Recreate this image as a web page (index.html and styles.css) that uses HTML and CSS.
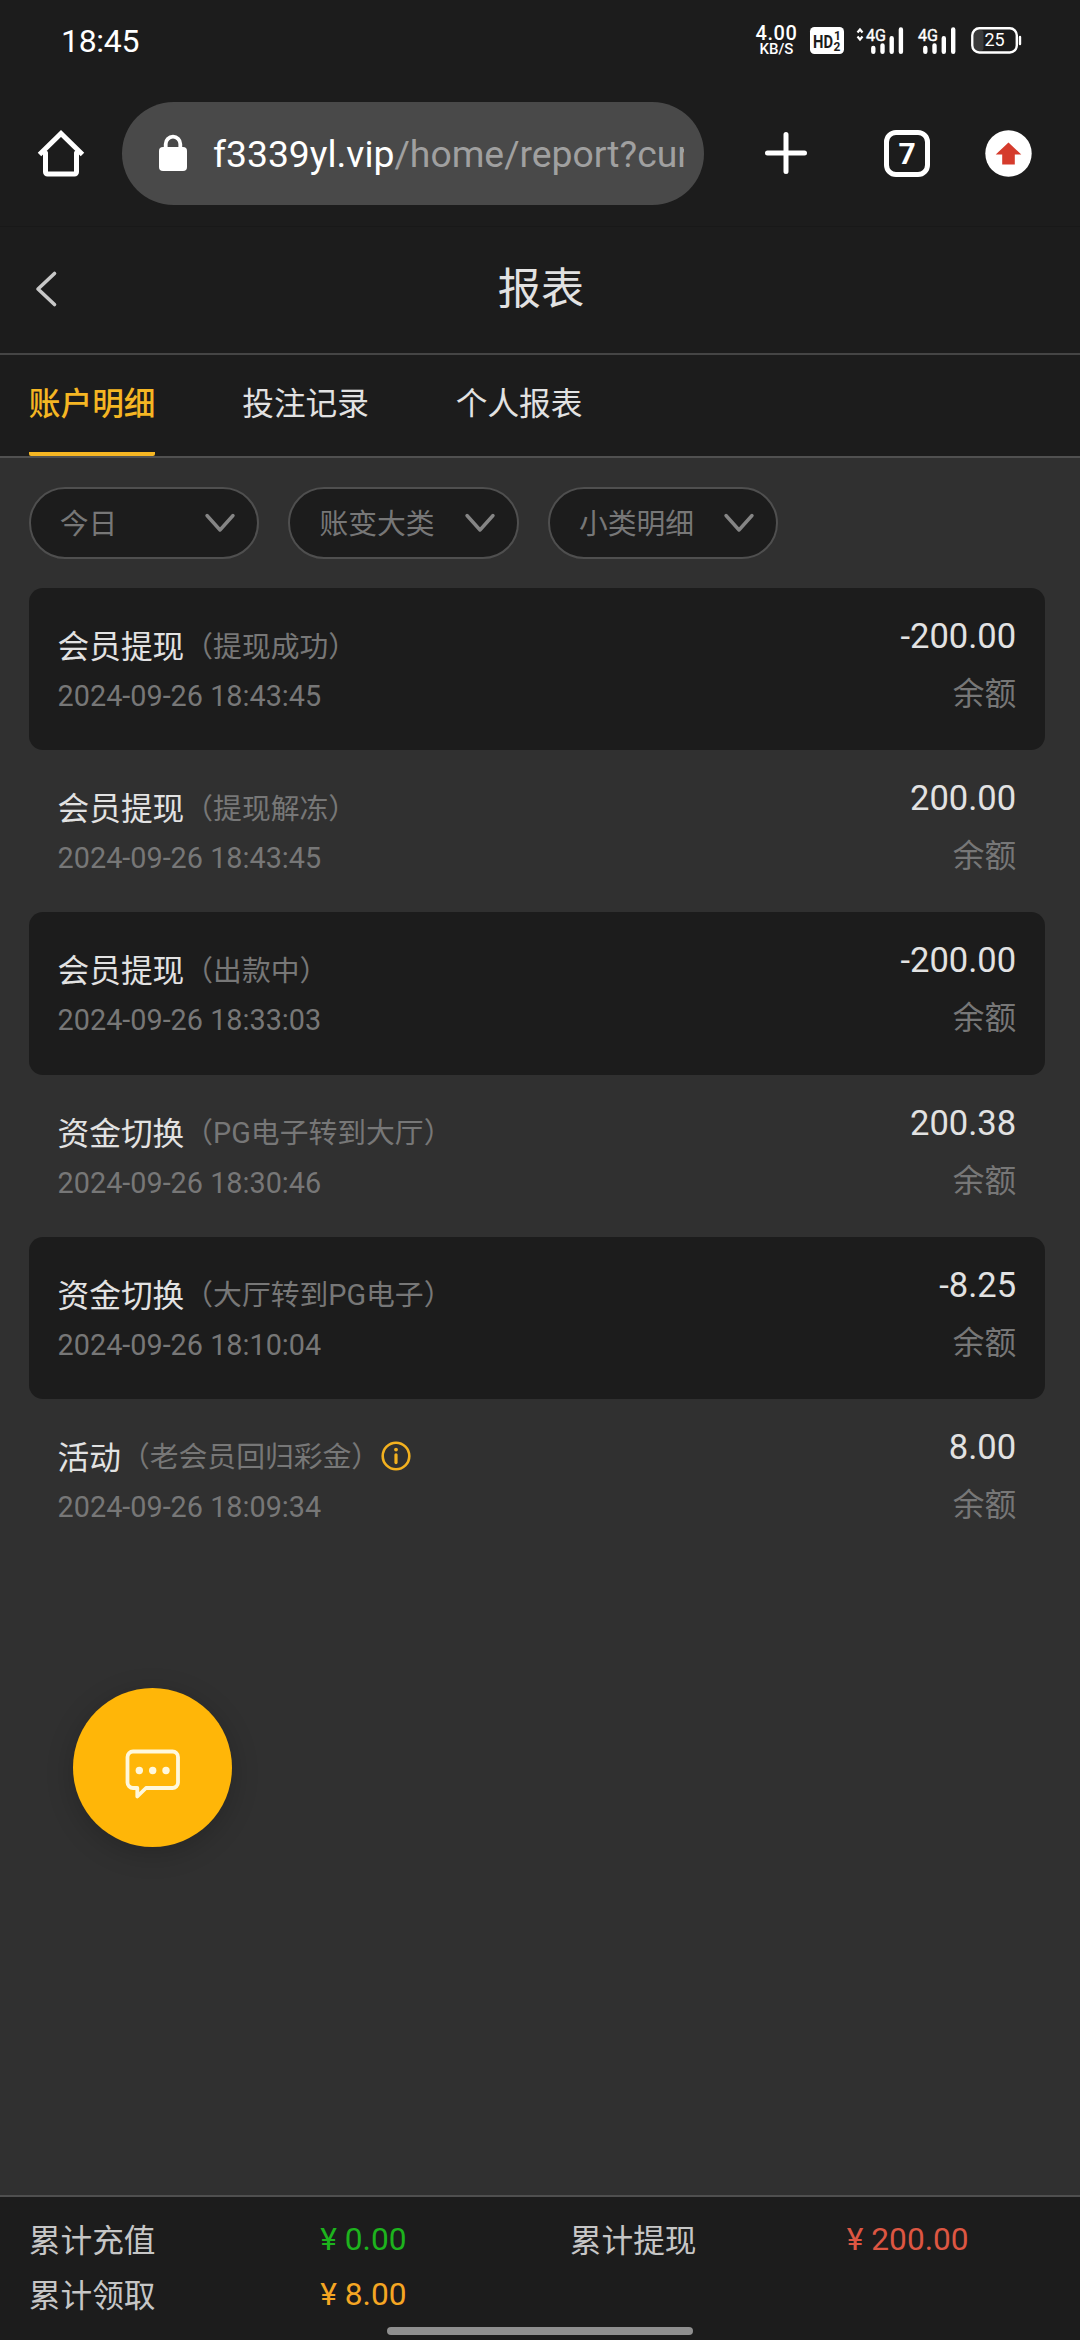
FILE: index.html
```html
<!DOCTYPE html>
<html lang="zh-CN">
<head>
<meta charset="utf-8">
<title>报表</title>
<link rel="stylesheet" href="styles.css">
</head>
<body>
<div class="status-bar">
  <span class="clock">18:45</span>
  <div class="status-icons">
    <div class="net-speed"><b>4.00</b><span>KB/S</span></div>
    <svg class="hd" width="34" height="27" viewBox="0 0 34 27">
      <rect width="34" height="27" rx="4.5" fill="#fff"/>
      <text x="3" y="20.5" font-size="18" font-weight="700" textLength="20" lengthAdjust="spacingAndGlyphs" fill="#1c1c1c">HD</text>
      <text x="24" y="13" font-size="12" font-weight="700" fill="#1c1c1c">1</text>
      <text x="23.5" y="24" font-size="12" font-weight="700" fill="#1c1c1c">2</text>
    </svg>
    <svg class="signal-a" width="48" height="27" viewBox="0 0 48 27">
      <path d="M1.500 5.500 4 2.500l2.500 3M1.500 9.500 4 12.500l2.500-3" fill="none" stroke="#fff" stroke-width="2.200"/>
      <text x="10" y="13.500" font-size="17" textLength="20" lengthAdjust="spacingAndGlyphs" fill="#fff" stroke="#fff" stroke-width=".4">4G</text>
      <path d="M17.300 21v3.800M26.500 18.500v6.300M35.700 11.300v13.500M44.900 2.500v22.300" stroke="#fff" stroke-width="4.400" stroke-linecap="round"/>
    </svg>
    <svg class="signal-b" width="39" height="27" viewBox="0 0 39 27">
      <text x="0" y="13.500" font-size="17" textLength="20" lengthAdjust="spacingAndGlyphs" fill="#fff" stroke="#fff" stroke-width=".4">4G</text>
      <path d="M7.300 21v3.800M16.500 18.500v6.300M25.800 11.300v13.500M35.200 2.500v22.300" stroke="#fff" stroke-width="4.400" stroke-linecap="round"/>
    </svg>
    <svg width="51" height="27" viewBox="0 0 51 27">
      <rect x="3" y="3" width="9.500" height="21" rx="3" fill="#3b3b3b"/>
      <rect x="1.300" y="1.300" width="44.500" height="24.200" rx="7" fill="none" stroke="#fff" stroke-width="2.400"/>
      <path d="M49 10v7" stroke="#fff" stroke-width="2.400" stroke-linecap="round"/>
      <text x="13.600" y="19.200" font-size="18" textLength="20" fill="#fff">25</text>
    </svg>
  </div>
</div>

<div class="browser-bar">
  <svg class="home" width="48" height="48" viewBox="0 0 48 48" fill="none" stroke="#fff" stroke-width="5" stroke-linecap="round" stroke-linejoin="round">
    <path d="M8.500 24v19a2 2 0 0 0 2 2h27a2 2 0 0 0 2-2V24"/>
    <path d="M2.500 25.500 24 4.500l21.500 21" stroke-linecap="butt" stroke-linejoin="miter"/>
  </svg>
  <div class="address">
    <svg width="28" height="36" viewBox="0 0 28 36">
      <rect y="12" width="28" height="24" rx="4" fill="#fff"/>
      <path d="M6.700 14V9a7.300 7.300 0 0 1 14.600 0v5" fill="none" stroke="#fff" stroke-width="3.800"/>
    </svg>
    <div class="url">f3339yl.vip<span>/home/report?cur</span></div>
  </div>
  <svg class="plus" width="42" height="42" viewBox="0 0 42 42"><path d="M21 2.500v37M2.500 21h37" stroke="#fff" stroke-width="5" stroke-linecap="round"/></svg>
  <div class="tab-count">7</div>
  <svg class="update" width="47" height="47" viewBox="0 0 47 47">
    <circle cx="23.500" cy="23.500" r="23.200" fill="#fff"/>
    <path d="M23.500 12.500 36.300 24.500H29.800V34.500H17.200V24.500H10.700Z" fill="#d53b2c"/>
  </svg>
</div>

<header class="page-header">
  <svg class="back" width="22" height="36" viewBox="0 0 22 36"><path d="M19.500 1.500 3 17l16.500 15.500" fill="none" stroke="#c8c8c8" stroke-width="3.600" stroke-linecap="round" stroke-linejoin="round"/></svg>
  <h1>报表</h1>
</header>

<nav class="tabs">
  <a class="tab active">账户明细</a>
  <a class="tab">投注记录</a>
  <a class="tab">个人报表</a>
</nav>

<main>
  <div class="filters">
    <div class="filter"><span>今日</span><svg width="30" height="20" viewBox="0 0 30 20"><path d="M2 2.500 15 17 28 2.500"/></svg></div>
    <div class="filter"><span>账变大类</span><svg width="30" height="20" viewBox="0 0 30 20"><path d="M2 2.500 15 17 28 2.500"/></svg></div>
    <div class="filter"><span>小类明细</span><svg width="30" height="20" viewBox="0 0 30 20"><path d="M2 2.500 15 17 28 2.500"/></svg></div>
  </div>

  <div class="records">
    <div class="record">
      <div class="info"><div class="title">会员提现<small>（提现成功）</small></div><time>2024-09-26 18:43:45</time></div>
      <div class="sum"><div class="amount">-200.00</div><div class="kind">余额</div></div>
    </div>
    <div class="record">
      <div class="info"><div class="title">会员提现<small>（提现解冻）</small></div><time>2024-09-26 18:43:45</time></div>
      <div class="sum"><div class="amount">200.00</div><div class="kind">余额</div></div>
    </div>
    <div class="record">
      <div class="info"><div class="title">会员提现<small>（出款中）</small></div><time>2024-09-26 18:33:03</time></div>
      <div class="sum"><div class="amount">-200.00</div><div class="kind">余额</div></div>
    </div>
    <div class="record">
      <div class="info"><div class="title">资金切换<small>（PG电子转到大厅）</small></div><time>2024-09-26 18:30:46</time></div>
      <div class="sum"><div class="amount">200.38</div><div class="kind">余额</div></div>
    </div>
    <div class="record">
      <div class="info"><div class="title">资金切换<small>（大厅转到PG电子）</small></div><time>2024-09-26 18:10:04</time></div>
      <div class="sum"><div class="amount">-8.25</div><div class="kind">余额</div></div>
    </div>
    <div class="record">
      <div class="info"><div class="title">活动<small>（老会员回归彩金）</small><svg width="30" height="30" viewBox="0 0 30 30"><circle cx="15" cy="15" r="13.300" fill="none" stroke="#f3b11f" stroke-width="2.600"/><circle cx="15" cy="8.600" r="1.900" fill="#f3b11f"/><path d="M15 13.800v7.800" stroke="#f3b11f" stroke-width="3.200" stroke-linecap="round"/></svg></div><time>2024-09-26 18:09:34</time></div>
      <div class="sum"><div class="amount">8.00</div><div class="kind">余额</div></div>
    </div>
  </div>
</main>

<footer class="totals">
  <span class="label">累计充值</span><span class="green">¥ 0.00</span>
  <span class="label">累计提现</span><span class="red">¥ 200.00</span>
  <span class="label">累计领取</span><span class="orange">¥ 8.00</span>
</footer>

<div class="chat">
  <svg width="56" height="52" viewBox="0 0 56 52">
    <path d="M8 2.500h39.500a5.500 5.500 0 0 1 5.500 5.500v25.500a5.500 5.500 0 0 1-5.500 5.500H21L12.300 47.500V39H8a5.500 5.500 0 0 1-5.500-5.500V8A5.500 5.500 0 0 1 8 2.500Z" fill="none" stroke="#fff8dc" stroke-width="3.800" stroke-linejoin="round"/>
    <g fill="#fff8dc"><circle cx="14.300" cy="21.500" r="3.700"/><circle cx="27.700" cy="21.500" r="3.700"/><circle cx="41" cy="21.500" r="3.700"/></g>
  </svg>
</div>
<div class="home-indicator"></div>
</body>
</html>
```
FILE: styles.css
```css
* { box-sizing: border-box; }

body {
  margin: 0;
  width: 1080px;
  height: 2340px;
  display: flex;
  flex-direction: column;
  position: relative;
  overflow: hidden;
  background: #1c1c1c;
  color: #e2e2e2;
  font-family: Roboto, "Noto Sans CJK SC", sans-serif;
}

svg { flex: none; display: block; overflow: visible; }

/* phone status bar */
.status-bar {
  height: 81px;
  padding: 0 58px 0 61px;
  display: flex;
  justify-content: space-between;
  align-items: center;
  color: #fff;
}
.clock { font-size: 32px; letter-spacing: -0.3px; line-height: 40px; }
.status-icons { display: flex; align-items: center; }
.net-speed {
  width: 41px;
  display: flex;
  flex-direction: column;
  align-items: center;
  font-weight: 500;
  line-height: 15px;
  font-size: 15px;
}
.net-speed b { font-size: 20px; font-weight: 500; line-height: 17px; letter-spacing: 0.6px; }
.hd { margin-left: 13px; }
.signal-a { margin-left: 12px; }
.signal-b { margin-left: 14px; }
.status-icons svg:last-child { margin-left: 14px; }

/* browser toolbar */
.browser-bar {
  height: 146px;
  padding: 21px 47px 22px 37px;
  display: flex;
  align-items: center;
  border-bottom: 1px solid #181818;
}
.address {
  width: 582px;
  height: 103px;
  margin-left: 37px;
  padding: 0 20px 0 37px;
  display: flex;
  align-items: center;
  gap: 26px;
  border-radius: 52px;
  background: #494949;
}
.url {
  flex: 1;
  padding-top: 2px;
  overflow: hidden;
  white-space: nowrap;
  color: #fff;
  font-size: 37.3px;
  line-height: 50px;
}
.url span { color: #a0a0a0; }
.plus { margin-left: 61px; }
.tab-count {
  width: 46px;
  height: 47px;
  margin-left: 77px;
  border: 5px solid #fff;
  border-radius: 12px;
  color: #fff;
  font-size: 30px;
  font-weight: 700;
  line-height: 37px;
  text-align: center;
}
.update { margin-left: 55px; }

/* page header */
.page-header {
  height: 128px;
  padding: 0 35px;
  display: grid;
  grid-template-columns: 22px 1fr 22px;
  align-items: center;
  border-bottom: 2px solid #454545;
}
.page-header h1 { margin: 0; padding-left: 2px; font-size: 43.2px; font-weight: 400; line-height: 60px; text-align: center; }

.tabs {
  height: 103px;
  padding: 0 28.8px;
  display: flex;
  gap: 86.8px;
  border-bottom: 2px solid #505050;
}
.tab { font-size: 31.68px; line-height: 100px; height: 101px; }
.tab.active { color: #f5b623; font-weight: 500; border-bottom: 4px solid #f5b623; border-radius: 0 0 2px 2px; }

main { flex: 1; padding: 29px 35px 0 28.8px; background: #303030; }

.filters { display: flex; gap: 29.2px; }
.filter {
  width: 230.4px;
  height: 72px;
  padding: 0 22px 0 29px;
  display: flex;
  justify-content: space-between;
  align-items: center;
  border: 2px solid #4f4f4f;
  border-radius: 36px;
  background: #1c1c1c;
  color: #777;
  font-size: 28.8px;
}
.filter span { padding-bottom: 4px; }
.filter path { fill: none; stroke: #858585; stroke-width: 3.4; stroke-linecap: round; stroke-linejoin: round; }

.records { margin-top: 29px; }
.record {
  height: 162.2px;
  padding: 0 28.8px;
  display: flex;
  justify-content: space-between;
  border-radius: 14px;
}
.record:nth-child(odd) { background: #1c1c1c; }
.info { padding-top: 32px; }
.title { display: flex; align-items: center; height: 48px; font-size: 31.68px; }
.title small { font-size: 28.8px; color: #777; }
.title svg { margin: 2px 0 0 1px; }
.info time { display: block; font-size: 28.8px; line-height: 56px; color: #777; }
.sum { padding-top: 24px; text-align: right; }
.amount { font-size: 34.56px; line-height: 48px; }
.kind { font-size: 31.68px; line-height: 69px; color: #777; }

/* summary */
.totals {
  height: 145px;
  padding: 15px 28.8px 0;
  display: grid;
  grid-template-columns: 291.5px 249.5px 277px 1fr;
  grid-auto-rows: 55px;
  align-items: center;
  border-top: 2px solid #4f4f4f;
  color: #c6c6c6;
  font-size: 31.68px;
}
.totals .label { padding-bottom: 3px; }
.green { color: #1db31d; }
.red { color: #dd5642; }
.orange { color: #f5a623; }

.chat {
  position: absolute;
  left: 73px;
  top: 1688px;
  width: 159px;
  height: 159px;
  padding-top: 14px;
  display: grid;
  place-items: center;
  border-radius: 50%;
  background: #ffb608;
  box-shadow: 0 6px 28px rgba(0, 0, 0, 0.2);
}
.home-indicator {
  position: absolute;
  left: 387px;
  bottom: 5px;
  width: 306px;
  height: 8px;
  border-radius: 4px;
  background: #8f8f8f;
}
```
